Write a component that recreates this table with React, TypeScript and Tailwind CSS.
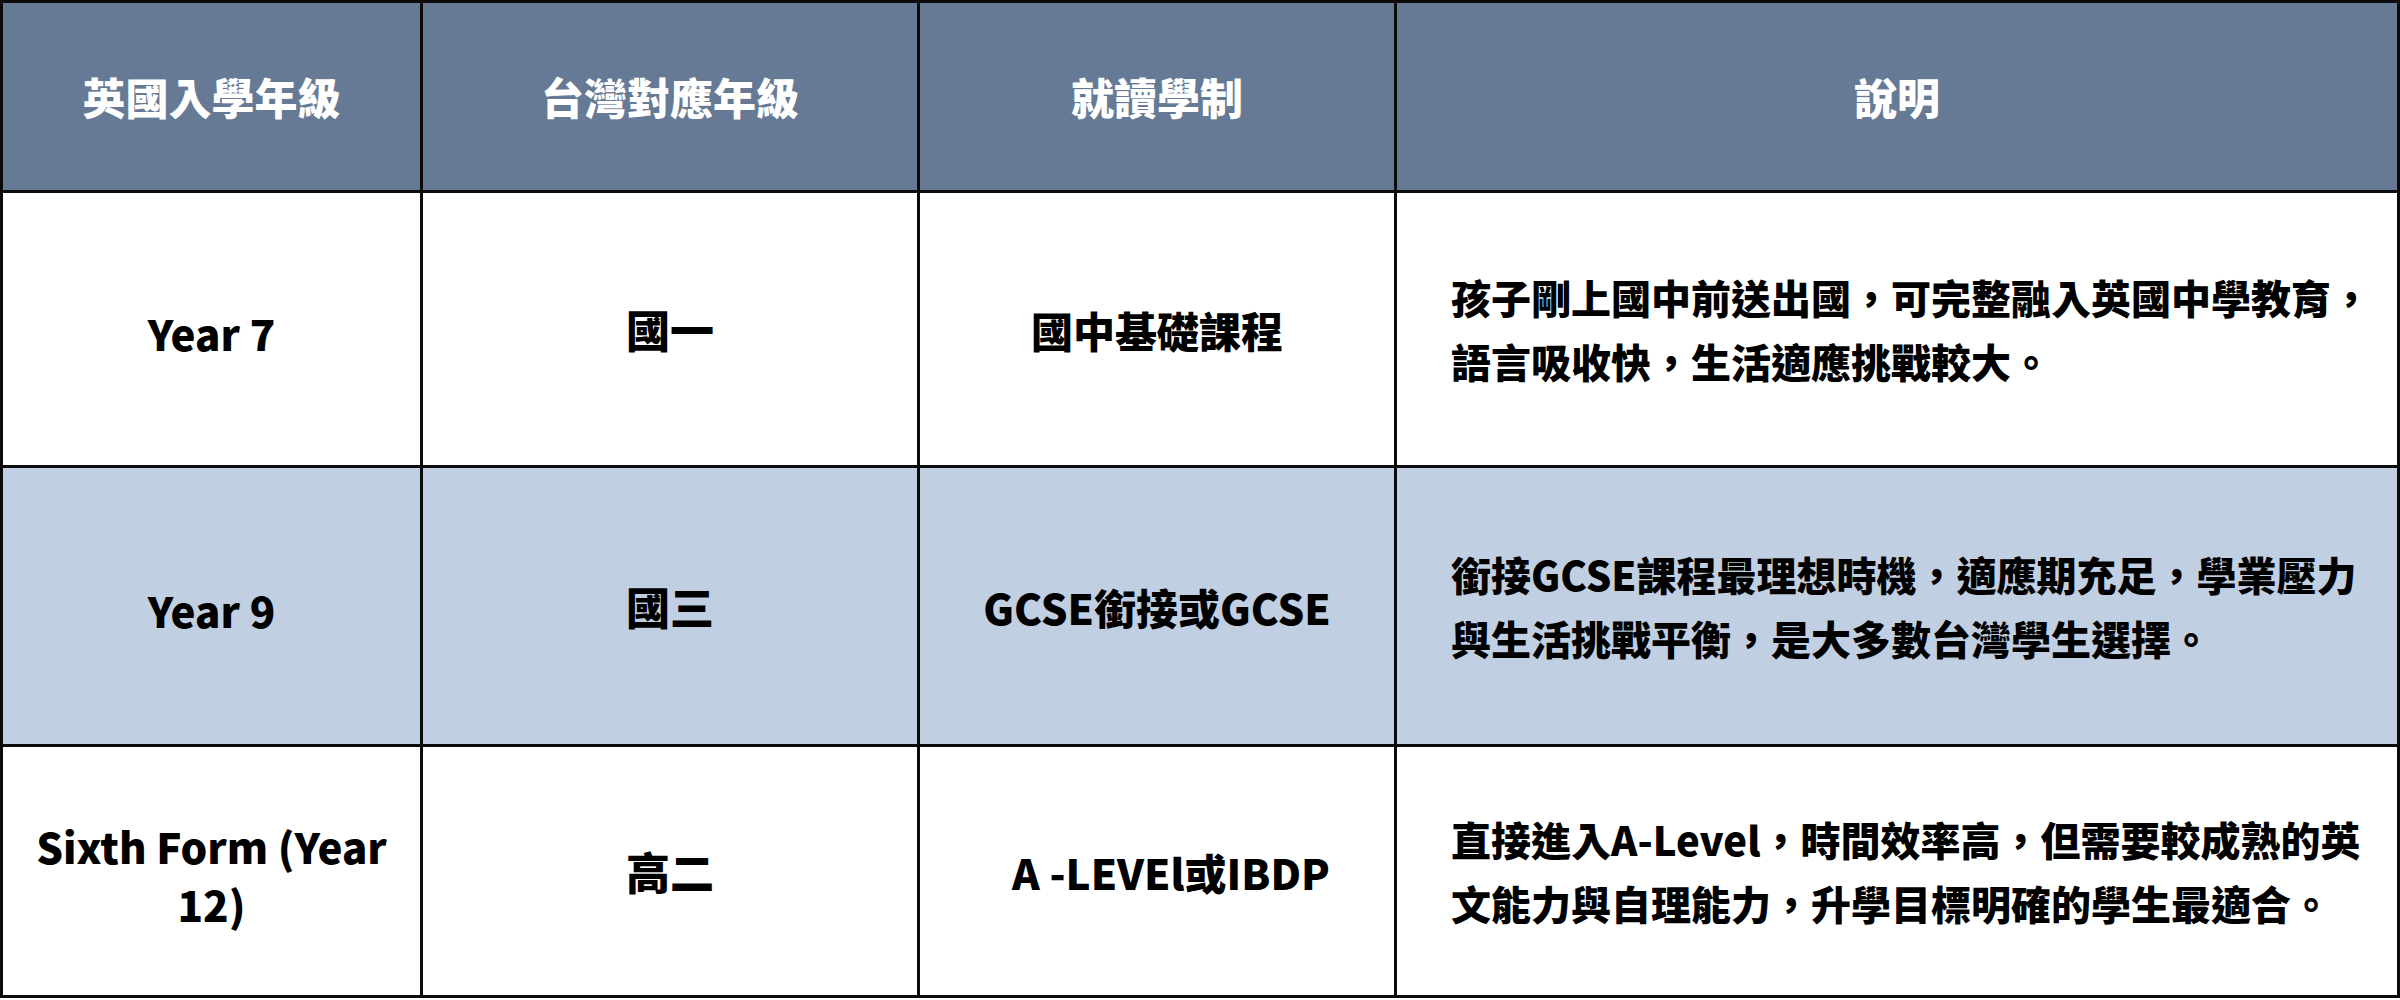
const rows = [
  {
    uk: "Year 7",
    tw: "國一",
    course: "國中基礎課程",
    note: ["孩子剛上國中前送出國，可完整融入英國中學教育，", "語言吸收快，生活適應挑戰較大。"],
    shaded: false,
    shift: "",
  },
  {
    uk: "Year 9",
    tw: "國三",
    course: "GCSE銜接或GCSE",
    note: ["銜接GCSE課程最理想時機，適應期充足，學業壓力", "與生活挑戰平衡，是大多數台灣學生選擇。"],
    shaded: true,
    shift: "",
  },
  {
    uk: "Sixth Form (Year 12)",
    tw: "高二",
    course: "A -LEVEl或IBDP",
    note: ["直接進入A-Level，時間效率高，但需要較成熟的英", "文能力與自理能力，升學目標明確的學生最適合。"],
    shaded: false,
    shift: "pl-7",
  },
];

const headers = ["英國入學年級", "台灣對應年級", "就讀學制", "說明"];

export default function App() {
  return (
    <div
      lang="zh-Hant"
      className="w-[2400px] h-[1000px] bg-white"
      style={{ fontFamily: '"Noto Sans CJK TC", "Noto Sans", sans-serif' }}
    >
      <div className="grid w-[2400px] grid-cols-[417px_494px_474px_1000px] grid-rows-[187px_272px_276px_248px] gap-[3px] bg-[#0b0b0b] p-[3px]">
        {headers.map((h) => (
          <div
            key={h}
            className="flex items-center justify-center bg-[#667a96] text-[43px] font-black text-white"
          >
            {h}
          </div>
        ))}

        {rows.map((r) => {
          const bg = r.shaded ? "bg-[#c0cfe2]" : "bg-white";
          return [
            <div
              key={r.uk + "-uk"}
              className={`flex items-center justify-center px-3 pt-2 text-center text-[42px] font-black leading-[58px] text-black ${bg}`}
            >
              {r.uk}
            </div>,
            <div
              key={r.uk + "-tw"}
              className={`flex items-center justify-center text-[44px] font-black text-black ${bg}`}
            >
              {r.tw}
            </div>,
            <div
              key={r.uk + "-course"}
              className={`flex items-center justify-center text-[42px] font-black text-black ${r.shift} ${bg}`}
            >
              {r.course}
            </div>,
            <div
              key={r.uk + "-note"}
              className={`flex items-center pl-[54px] text-[40px] font-black leading-[64px] text-black ${bg}`}
            >
              <p className="whitespace-nowrap">
                {r.note[0]}
                <br />
                {r.note[1]}
              </p>
            </div>,
          ];
        })}
      </div>
    </div>
  );
}
